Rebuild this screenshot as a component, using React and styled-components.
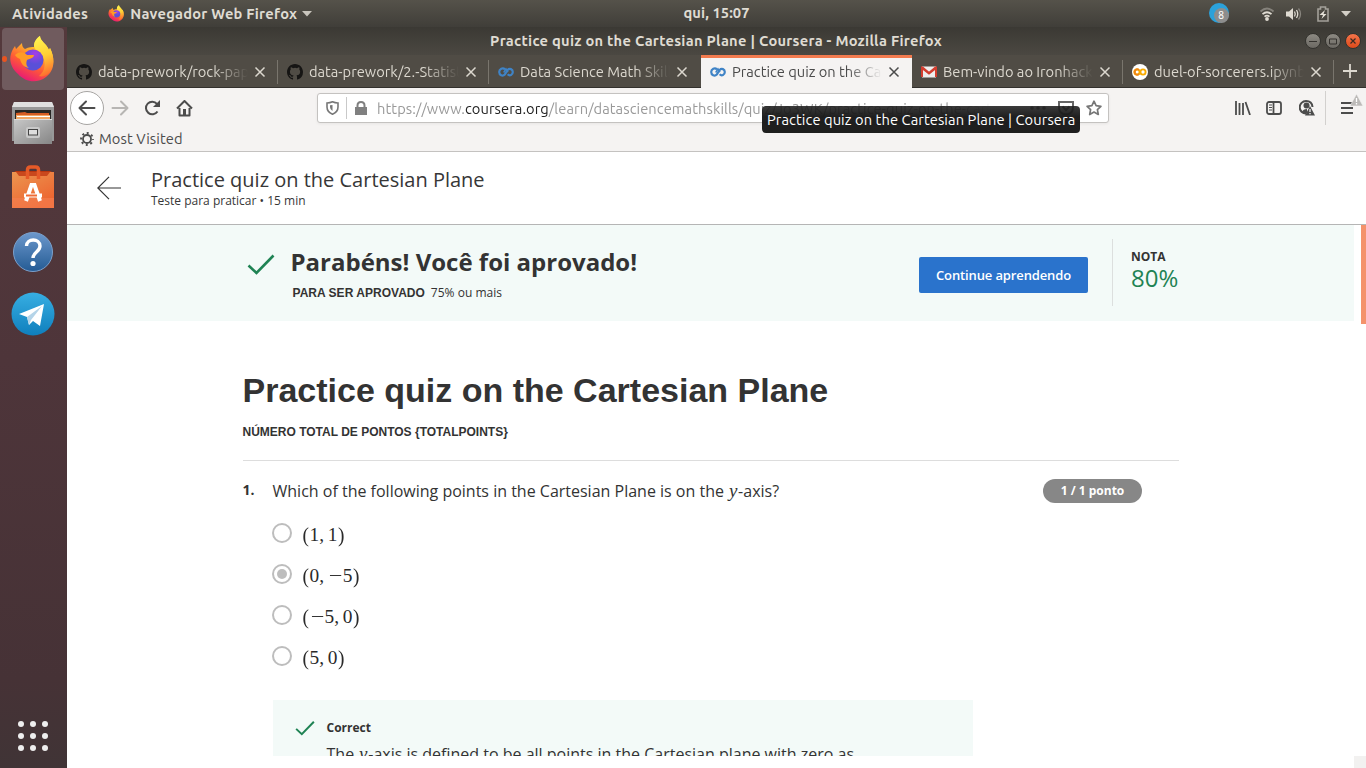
import React from 'react';
import styled, { createGlobalStyle } from 'styled-components';

const Global = createGlobalStyle`
  * { box-sizing: border-box; }
  html, body { margin: 0; overflow: hidden; }
  h1, h2, h3, p { margin: 0; }
  svg { display: block; flex: none; }
`;
const ui = `'Ubuntu', 'Noto Sans', sans-serif`;
const open = `'Open Sans', 'Noto Sans', sans-serif`;

const Desktop = styled.div`
  width: 1366px; height: 768px; display: flex; flex-direction: column;
  overflow: hidden; font-family: ${ui}; background: #fff; white-space: nowrap;
`;
const Text = styled.span`
  display: inline-block;
  font-size: ${p => p.$size || 14.67}px;
  font-weight: ${p => p.$weight || 400};
  letter-spacing: ${p => p.$track || 0}px;
  line-height: 18px;
`;
const TopBar = styled.header`
  height: 27px; flex: none; display: grid; grid-template-columns: 1fr auto 1fr; align-items: center;
  background: linear-gradient(#55524a, #403e39); color: #dfdbd2; padding: 0 15px 0 12px;
`;
const BarLeft = styled.div`display: flex; align-items: center; height: 27px;`;
const Clock = styled.div`padding: 0 0 2px 70px;`;
const AppMenu = styled.div`display: flex; align-items: center; margin-left: 20px; gap: 5px;`;
const Tray = styled.div`display: flex; align-items: center; justify-content: flex-end; height: 27px;`;
const Wrap = styled.div`margin-left: ${p => p.$l || 0}px; display: flex;`;
const Below = styled.div`display: flex; flex: 1; min-height: 0;`;
const Dock = styled.nav`
  width: 67px; flex: none; display: flex; flex-direction: column; align-items: center;
  background: linear-gradient(#54393c, #4e353a 45%, #463236 88%, #403436);
  padding: 1px 3px 13px 2px;
`;
const DockTile = styled.div`
  width: 62px; height: 62px; border-radius: 4px; background: #705b5e;
  display: flex; align-items: center; justify-content: center; position: relative;
  &::before { content: ''; position: absolute; left: 0; top: 28px; width: 5px; height: 6px; border-radius: 50%; background: #e95420; }
`;
const DockIcon = styled.div`height: 64px; display: flex; align-items: center; justify-content: center; padding-top: ${p => p.$drop || 0}px;`;
const Spacer = styled.div`flex: 1;`;
const AppGrid = styled.div`
  display: grid; grid-template-columns: repeat(3, 6px); gap: 6px; padding: 4px 1px 4px 0;
  & > i { width: 6px; height: 6px; border-radius: 50%; background: #eee; }
`;
const Window = styled.main`flex: 1; min-width: 0; display: flex; flex-direction: column;`;
const TitleBar = styled.div`
  height: 28px; flex: none; display: grid; grid-template-columns: 1fr auto 1fr; align-items: center;
  padding: 0 5px 0 4px; background: linear-gradient(#3b3934, #4b4842); color: #dfdbd2;
`;
const WindowButtons = styled.div`display: flex; gap: 4px; justify-content: flex-end;`;
const RoundButton = styled.div`
  width: 16px; height: 16px; border-radius: 50%; border: 1px solid #34332f;
  background: ${p => (p.$close ? 'linear-gradient(#f4744a, #de4a1a)' : 'linear-gradient(#8c8982, #6c6963)')};
  display: flex; align-items: center; justify-content: center;
`;
const Tabs = styled.div`
  height: 33px; flex: none; display: flex; background: #504c45; color: #dcd8cf;
`;
const Tab = styled.div`
  width: ${p => p.$w || 211}px; height: 33px; flex: none; display: flex; align-items: center; position: relative;
  padding: 0 0 1px 9px; overflow: hidden;
  background: ${p => (p.$active ? '#f5f3f2' : '#504c45')};
  color: ${p => (p.$active ? '#4b4b4b' : '#dcd8cf')};
  border-bottom: 1px solid ${p => (p.$active ? '#f5f3f2' : '#33312d')};
  border-top: 3px solid ${p => (p.$active ? '#f37b4f' : '#504c45')};
  ${p => p.$sep && `&::after { content: ''; position: absolute; right: 0; top: 2px; width: 1px; height: 24px; background: #79756d; }`}
`;
const TabTitle = styled.div`
  width: 150px; height: 20px; margin: 0 0 0 6px; overflow: hidden; flex: none;
  mask-image: linear-gradient(90deg, #000 calc(100% - 35px), transparent);
`;
const TabClose = styled.div`margin-left: 6px;`;
const Plus = styled.div`flex: 1; display: flex; align-items: center; justify-content: center; border-bottom: 1px solid #33312d;`;
const NavBar = styled.div`
  height: 41px; flex: none; display: flex; align-items: center; background: #f5f3f2; padding: 0 0 1px 3px; color: #4c4c4c;
`;
const BackButton = styled.div`
  width: 34px; height: 34px; border-radius: 50%; border: 1px solid #a7a5a3; background: #fff;
  display: flex; align-items: center; justify-content: center;
`;
const UrlBox = styled.div`
  width: 792px; height: 30px; margin-left: 124px; border: 1px solid #c4c2c0; border-radius: 3px;
  background: #fff; display: flex; align-items: center; padding-left: 8px; color: #999;
  box-shadow: 0 1px 3px rgba(0,0,0,.06);
`;
const Divider = styled.div`width: 1px; height: ${p => p.$h}px; background: ${p => p.$c || '#c9c9c9'}; margin: 0 ${p => p.$r || 0}px 0 ${p => p.$l || 0}px;`;
const Url = styled.div`
  width: 633px; overflow: hidden; margin: 2px 0 0 10px; height: 20px;
  mask-image: linear-gradient(90deg, #000 580px, transparent 615px);
  b { font-weight: 400; color: #222; }
`;
const Tooltip = styled.div`
  position: absolute; left: 762px; top: 106px; width: 318px; height: 27px; border-radius: 4px;
  background: linear-gradient(rgba(32,32,32,.88), rgba(24,24,24,.97) 40%); color: #fff; padding: 4px 5px;
`;
const Bookmarks = styled.div`
  height: 23px; flex: none; display: flex; align-items: center; gap: 5px; padding: 0 0 2px 13px; background: #f5f3f2;
  border-bottom: 1px solid #c4c2c0; color: #4c4c4c;
`;
const PageHeader = styled.div`
  height: 73px; flex: none; display: flex; border-bottom: 1px solid #b5b5b5; background: #fff;
  padding: 24px 0 0 30px; gap: 30px; font-family: ${open}; color: #373737;
`;
const HeaderText = styled.div`margin-top: -10px;`;
const QuizName = styled.div`font-size: 20px; line-height: 28px;`;
const QuizMeta = styled.div`font-size: 12px; line-height: 14px;`;
const Viewport = styled.section`height: 531px; flex: none; overflow: hidden; display: flex; font-family: ${open}; color: #333;`;
const Page = styled.div`width: 1287px; flex: none;`;
const ScrollTrack = styled.div`
  width: 12px; display: flex; justify-content: flex-end; background: #fff;
  &::after { content: ''; width: 5px; height: 99px; background: #f4926b; }
`;
const BottomTrack = styled.div`
  height: 12px; display: flex; justify-content: flex-end; background: #fff;
  &::after { content: ''; width: 12px; background: #f2f1f0; }
`;
const Banner = styled.div`height: 96px; background: #f3faf8; display: flex; padding-left: 180px;`;
const BannerCheck = styled.div`padding-top: 28px; width: 43.500px;`;
const Passed = styled.div`width: 628.500px; padding-top: 20px;`;
const Congrats = styled.h2`font-size: 24px; line-height: 34px; font-weight: 700;`;
const PassLine = styled.p`
  font-size: 12px; line-height: 16px; padding: 6px 0 0 2px; letter-spacing: 0.02px;
  b { font-family: 'Liberation Sans', sans-serif; margin-right: 6px; }
`;
const Continue = styled.button`
  width: 169px; height: 36px; margin-top: 32px; border: 0; border-radius: 2px; background: #2a73cc; color: #fff;
  font: 600 13px/36px ${open}; padding: 0; letter-spacing: -0.13px;
`;
const Grade = styled.div`
  margin: 14px 0 0 24px; height: 67px; border-left: 1px solid #dcdfde; padding: 10px 0 0 18px;
  font-size: 24px; line-height: 25px; color: #1f8354;
  b { display: block; font-size: 12px; line-height: 16px; color: #333; }
`;
const Quiz = styled.article`padding: 45px 0 0 175.500px; width: 1112px;`;
const Title = styled.h1`font: 700 34px/48px 'Liberation Sans', Arial, sans-serif;`;
const Points = styled.p`font: 700 12px/16px 'Liberation Sans', Arial, sans-serif; padding: 10px 0 20px; border-bottom: 1px solid #ddd;`;
const Question = styled.div`display: flex; padding-top: 18px; height: 64px;`;
const Num = styled.b`width: 30px; font-size: 14px; line-height: 22px;`;
const Prompt = styled.div`width: 770.500px; font-size: 16px; line-height: 24px;`;
const Score = styled.div`
  width: 99px; height: 24px; border-radius: 12px; background: #878787; color: #fff; text-align: center;
  font-size: 12px; line-height: 24px; font-weight: 700;
`;
const Options = styled.div`padding-left: 29.500px; margin-top: -2px;`;
const Option = styled.div`display: flex; height: 41px; gap: 10px; align-items: flex-start;`;
const Radio = styled.div`
  width: 20px; height: 20px; border-radius: 50%; border: 2px solid #bdbdbd; display: grid; place-items: center;
  &::after { content: ''; width: 10px; height: 10px; border-radius: 50%; background: ${p => (p.$on ? '#bdbdbd' : 'transparent')}; }
`;
const MathRow = styled.div`display: flex; font: 19.36px/24px 'Liberation Serif', serif; color: #2a2a2a;`;
const Glyph = styled.span`
  width: ${p => p.$w}em; text-align: ${p => p.$align || 'center'};
  transform: scale(${p => p.$sx || 1}, ${p => p.$sy || 1});
`;
const Var = styled.i`
  display: inline-block; width: 10px; font: italic 19px/1 'Liberation Serif', serif; line-height: 0; text-align: center;
`;
const Feedback = styled.div`
  margin: 13px 0 0 30.500px; width: 700px; height: 120px; background: #f3faf8; display: flex; padding: 20px 0 0 20.500px; gap: 11px;
`;
const FeedbackTitle = styled.b`display: block; font-size: 12px; line-height: 16px;`;
const FeedbackText = styled.p`font-size: 16px; line-height: 24px; padding-top: 6px;`;

const Firefox = ({ size, id }) => (
  <svg width={size} height={size} viewBox="0 0 48 48">
    <defs>
      <linearGradient id={id + 'a'} x1=".8" y1="0" x2=".3" y2="1"><stop offset="0" stopColor="#fff04a" /><stop offset=".35" stopColor="#ffb02a" /><stop offset=".65" stopColor="#ff5a36" /><stop offset="1" stopColor="#e5127d" /></linearGradient>
      <radialGradient id={id + 'b'} cx=".6" cy=".2"><stop offset="0" stopColor="#a63ce8" /><stop offset="1" stopColor="#5a50d8" /></radialGradient>
      <linearGradient id={id + 'c'} x1=".4" y1="0" x2=".6" y2="1"><stop offset="0" stopColor="#fff44f" /><stop offset=".5" stopColor="#ffce35" /><stop offset="1" stopColor="#ff6a2f" /></linearGradient>
    </defs>
    <path d="M4 14l2-3 1 3 6-6c0 3 1 5 3 6 4-2 7-2 9-2 0-5 3-9 6-11 0 5 7 8 9 14l1-2c6 12 4 23-4 29-9 7-21 5-28-3C1 32-1 23 4 14z" fill={`url(#${id}a)`} />
    <path d="M31 1c0 5 7 8 9 14l1-2c5 10 4 19-1 25-3 3-7 4-10 3 6-5 7-12 4-19-2-5-8-6-9-11 0-5 3-8 6-10z" fill={`url(#${id}c)`} />
    <circle cx="24" cy="25" r="10.500" fill={`url(#${id}b)`} />
    <path d="M6 20c5-4 9-3 12 0h7c0 3-5 4-7 5-1 3-1 6 2 8-6-1-8-5-9-9-2-1-4-2-5-4z" fill="#ff9b27" />
  </svg>
);
const Github = () => (
  <svg width="16" height="16" viewBox="0 0 16 16"><path fill="#161514" fillRule="evenodd" d="M8 0C3.58 0 0 3.58 0 8c0 3.54 2.29 6.53 5.47 7.59.4.07.55-.17.55-.38v-1.49c-2.01.37-2.53-.49-2.69-.94-.09-.23-.48-.94-.82-1.13-.28-.15-.68-.52-.01-.53.63-.01 1.08.58 1.23.82.72 1.21 1.87.87 2.33.66.07-.52.28-.87.51-1.07-1.78-.2-3.64-.89-3.64-3.95 0-.87.31-1.59.82-2.15-.08-.2-.36-1.02.08-2.12 0 0 .67-.21 2.2.82a7.4 7.4 0 014 0c1.53-1.04 2.2-.82 2.2-.82.44 1.1.16 1.92.08 2.12.51.56.82 1.27.82 2.15 0 3.07-1.87 3.75-3.65 3.95.29.25.54.73.54 1.48v2.2c0 .21.15.46.55.38A8 8 0 0016 8c0-4.42-3.58-8-8-8z" /></svg>
);
const Coursera = () => (
  <svg width="16" height="16" viewBox="0 0 16 16" fill="none" stroke="#3f83c6" strokeWidth="2.2"><path d="M7 5.4C4.8 3 1.2 5 1.2 8s3.4 4.8 5.6 2.5L9.6 6c2-2.2 5.2-.8 5.2 2s-3 4.4-5.2 2.300" /><path d="M5.700 8.500L8 5l2 3.200" strokeWidth="1.500" /></svg>
);
const Gmail = () => (
  <svg width="16" height="16" viewBox="0 0 16 16"><path d="M1 2.500h14v11H1z" fill="#eee" /><path d="M1 13V4l7 5.500L15 4v9" fill="none" stroke="#d33e30" strokeWidth="2" /><path d="M1 3l7 6 7-6" fill="none" stroke="#d33e30" strokeWidth="2" /></svg>
);
const Colab = () => (
  <svg width="16" height="16" viewBox="0 0 16 16"><circle cx="8" cy="8" r="8" fill="#fff" /><g fill="none" stroke="#f9ab00" strokeWidth="1.900"><circle cx="5" cy="8" r="2.600" /><circle cx="11" cy="8" r="2.600" /></g><path d="M7 6a2.600 2.600 0 100 4" fill="none" stroke="#ee8512" strokeWidth="1.900" /></svg>
);
const Cross = () => <svg width="12" height="12" viewBox="0 0 12 12" fill="none" stroke="currentColor" strokeWidth="1.500"><path d="M1.500 1.500l9 9M10.500 1.500l-9 9" /></svg>;
const Check = ({ w, h, sw = 2.6 }) => <svg width={w} height={h} viewBox="0 0 28 24" fill="none" stroke="#1f8354" strokeWidth={sw}><path d="M1.500 12.500L9.500 20 26.500 2.500" /></svg>;
const Arrow = ({ flip, color }) => <svg width="18" height="16" viewBox="0 0 18 16" fill="none" stroke={color} strokeWidth="2" strokeLinecap="round" strokeLinejoin="round" transform={flip ? 'scale(-1 1)' : undefined}><path d="M16.500 8H2M8 1.500L1.500 8 8 14.500" /></svg>;

const Files = () => (
  <svg width="42" height="44" viewBox="0 0 42 44">
    <defs><linearGradient id="cab" x2="1" y2="1"><stop stopColor="#c8c8c8" /><stop offset="1" stopColor="#868686" /></linearGradient></defs>
    <path d="M2 1h38l2 5v34H0V6z" fill="#989898" /><path d="M2 1h38l2 5H0z" fill="#e0e0e0" />
    <path d="M3 9h36v11H3z" fill="#272624" /><path d="M4 12l9-1 2 1h22v7H4z" fill="#d65d24" /><path d="M4 14h34v5H4z" fill="#f1a765" /><path d="M5 15.500h33" stroke="#fff" />
    <path d="M2 18h38v25H2z" fill="url(#cab)" /><path d="M2 18.500h38" stroke="#ddd" />
    <rect x="14" y="26" width="14" height="11" rx="2" fill="#c9c9c9" /><rect x="16.500" y="28.500" width="9" height="5.500" fill="#ddd" stroke="#444" />
  </svg>
);
const Software = () => (
  <svg width="42" height="44" viewBox="0 0 42 44">
    <defs><linearGradient id="bag" x2=".6" y2="1"><stop stopColor="#eb9650" /><stop offset="1" stopColor="#ed6430" /></linearGradient></defs>
    <path d="M0 8l4-2h34l4 2z" fill="#b9360f" /><path d="M0 7h42v36H0z" fill="url(#bag)" /><path d="M4 7h34l-3 4H7z" fill="#c9481d" />
    <path d="M0 33h42v10H0z" fill="#f58052" opacity=".6" />
    <path d="M15.500 14V5q0-3 3-3h5q3 0 3 3v9" fill="none" stroke="#e65a28" strokeWidth="3.500" />
    <path d="M14 36l5.500-16h3L28 36M12 30.500h18" fill="none" stroke="#fff" strokeWidth="4" /><path d="M14 30.500h11" stroke="#f06c36" strokeWidth="2" />
  </svg>
);
const Help = () => (
  <svg width="42" height="42" viewBox="0 0 42 42">
    <defs><linearGradient id="hlp" x2="0" y2="1"><stop stopColor="#6c98cc" /><stop offset="1" stopColor="#245b94" /></linearGradient></defs>
    <circle cx="21" cy="21" r="19.500" fill="url(#hlp)" stroke="#7ba0cb" />
    <path d="M14.500 15c0-8 13.500-8 13.500 0 0 6-7 6-7 12" fill="none" stroke="#fff" strokeWidth="3.400" /><circle cx="21" cy="32.500" r="2.600" fill="#fff" />
  </svg>
);
const Telegram = () => (
  <svg width="44" height="44" viewBox="0 0 44 44">
    <defs><linearGradient id="tg" x2="0" y2="1"><stop stopColor="#37aee2" /><stop offset="1" stopColor="#0f7fbd" /></linearGradient></defs>
    <circle cx="22" cy="22" r="21.500" fill="url(#tg)" /><path d="M8 22l25-10-4 22-7-5-4 4-2-8z" fill="#fff" /><path d="M16 25l15-11-11 14-2 5z" fill="#b5d4e8" />
  </svg>
);

const widths = { '(': 0.389, ')': 0.389, ',': 0.445, '−': 0.778 };
const Expr = ({ value }) => (
  <MathRow>
    {[...value].map((c, i) => (
      <Glyph key={i} $w={widths[c] || 0.5} $align={c === ',' ? 'left' : 'center'} $sx={c === '−' ? 1.25 : 1} $sy={'()'.includes(c) ? 1.12 : 1}>{c}</Glyph>
    ))}
  </MathRow>
);

const tabs = [
  { icon: <Github />, text: 'data-prework/rock-paper', sep: true },
  { icon: <Github />, text: 'data-prework/2.-Statistics', sep: true },
  { icon: <Coursera />, text: 'Data Science Math Skills', width: 212 },
  { icon: <Coursera />, text: 'Practice quiz on the Cartesian', active: true },
  { icon: <Gmail />, text: 'Bem-vindo ao Ironhack', sep: true },
  { icon: <Colab />, text: 'duel-of-sorcerers.ipynb -', sep: true },
];
const options = ['(1,1)', '(0,−5)', '(−5,0)', '(5,0)'];

export default function App() {
  return (
    <Desktop>
      <Global />
      <TopBar>
        <BarLeft>
          <Text $weight={700} $track={0.3}>Atividades</Text>
          <AppMenu>
            <Firefox size={17} id="s" />
            <Text $weight={700} $track={0.24}>Navegador Web Firefox</Text>
            <svg width="10" height="6"><path d="M0 0h10L5 5.500z" fill="#c9c5bd" /></svg>
          </AppMenu>
        </BarLeft>
        <Clock><Text $weight={700} $track={0.1}>qui, 15:07</Text></Clock>
        <Tray>
          <svg width="21" height="21" viewBox="0 0 21 21"><circle cx="10" cy="10" r="10" fill="#2ba1da" /><circle cx="12.500" cy="12.500" r="7.500" fill="#8d8d8d" /><text x="12" y="16" fontSize="10" fill="#fff" textAnchor="middle" fontFamily="Noto Sans">8</text></svg>
          <Wrap $l={29}><svg width="16" height="14" viewBox="0 0 16 14" fill="none" stroke="#dfdbd2" strokeWidth="1.800"><path d="M1.500 4.500q6.500-6 13 0" stroke="#85827b" /><path d="M3.500 7.200q4.500-4 9 0M5.500 9.600q2.500-2 5 0" /><circle cx="8" cy="12" r="1" fill="#dfdbd2" /></svg></Wrap>
          <Wrap $l={11}><svg width="16" height="14" viewBox="0 0 16 14"><path d="M0 4.500h3L7 1v12L3 9.500H0z" fill="#dfdbd2" /><g fill="none" stroke="#dfdbd2" strokeWidth="1.300"><path d="M8.500 4.500q1.500 2.500 0 5M10.500 3q2.500 4 0 8" /><path d="M12.500 1.500q4 5.500 0 11" stroke="#89867f" /></g></svg></Wrap>
          <Wrap $l={15}><svg width="12" height="16" viewBox="0 0 12 16"><path d="M1 3h2.500V1h5v2H11v12H1z" fill="none" stroke="#a3a099" strokeWidth="1.600" /><path d="M8 4L2.500 9H6l-1.500 4L9.500 8H6.500z" fill="#e6e2d9" /></svg></Wrap>
          <Wrap $l={12}><svg width="10" height="6"><path d="M0 0h10L5 5.500z" fill="#d3cfc7" /></svg></Wrap>
        </Tray>
      </TopBar>
      <Below>
        <Dock>
          <DockTile><Firefox size={48} id="l" /></DockTile>
          <DockIcon $drop={2}><Files /></DockIcon>
          <DockIcon $drop={2}><Software /></DockIcon>
          <DockIcon $drop={3}><Help /></DockIcon>
          <DockIcon><Telegram /></DockIcon>
          <Spacer />
          <AppGrid>{Array.from({ length: 9 }, (_, i) => <i key={i} />)}</AppGrid>
        </Dock>
        <Window>
          <TitleBar>
            <span />
            <Text $weight={700} $track={0.26}>Practice quiz on the Cartesian Plane | Coursera - Mozilla Firefox</Text>
            <WindowButtons>
              <RoundButton><svg width="8" height="8"><path d="M0 4.500h8" stroke="#35332f" /></svg></RoundButton>
              <RoundButton><svg width="8" height="8"><path d="M.5 2h7v5h-7z" fill="none" stroke="#35332f" /></svg></RoundButton>
              <RoundButton $close><svg width="6" height="6"><path d="M.5.5l5 5m0-5l-5 5" stroke="#3b2a22" strokeWidth="1.200" /></svg></RoundButton>
            </WindowButtons>
          </TitleBar>
          <Tabs>
            {tabs.map((t, i) => (
              <Tab key={i} $active={t.active} $sep={t.sep} $w={t.width}>
                {t.icon}
                <TabTitle><Text>{t.text}</Text></TabTitle>
                <TabClose><Cross /></TabClose>
              </Tab>
            ))}
            <Plus><svg width="14" height="14"><path d="M7 0v14M0 7h14" stroke="#dcd8cf" strokeWidth="1.800" /></svg></Plus>
          </Tabs>
          <NavBar>
            <BackButton><Arrow color="#4c4c4c" /></BackButton>
            <Wrap $l={7}><Arrow flip color="#b7b5b3" /></Wrap>
            <Wrap $l={15}><svg width="17" height="16" viewBox="0 0 17 16" fill="none" stroke="#4c4c4c" strokeWidth="2"><path d="M13.500 11.500A6.300 6.300 0 1113 3.800" /><path d="M16 0v7H9z" fill="#4c4c4c" stroke="none" /></svg></Wrap>
            <Wrap $l={15}><svg width="17" height="17" viewBox="0 0 17 17" fill="none" stroke="#4c4c4c" strokeWidth="2"><path d="M1 8.500L8.500 1 16 8.500M3.500 8v7.500h10V8" strokeLinejoin="round" /><path d="M7 9h3v6H7z" fill="#4c4c4c" stroke="none" /></svg></Wrap>
            <UrlBox>
              <svg width="13" height="14" viewBox="0 0 13 14" fill="none" stroke="#777" strokeWidth="1.600"><path d="M1 2q3 0 5.500-1.200Q9 2 12 2v4q0 5-5.500 7.200Q1 11 1 6z" /><path d="M6.500 4v6Q4 8.500 4 6V4.300z" fill="#777" stroke="none" /></svg>
              <Divider $h={22} $l={7} $r={8} />
              <svg width="12" height="14" viewBox="0 0 12 14"><path d="M0 6h12v8H0z" fill="#808080" /><path d="M2.500 7V4.500q0-3.500 3.500-3.500t3.500 3.500V7" fill="none" stroke="#808080" strokeWidth="2" /></svg>
              <Url><Text $track={0.08}>https://www.<b>coursera.org</b>/learn/datasciencemathskills/quiz/Jo3WK/practice-quiz-on-the-cartesian</Text></Url>
              <Wrap $l={20}><svg width="16" height="4" fill="#666"><circle cx="2" cy="2" r="1.800" /><circle cx="8" cy="2" r="1.800" /><circle cx="14" cy="2" r="1.800" /></svg></Wrap>
              <Wrap $l={12}><svg width="16" height="15" viewBox="0 0 16 15" fill="none" stroke="#666" strokeWidth="2"><path d="M1 1h14v5q0 7-7 7.500Q1 13 1 6zM4.500 5.500L8 9l3.500-3.500" /></svg></Wrap>
              <Wrap $l={12}><svg width="16" height="16" viewBox="0 0 16 16" fill="none" stroke="#777" strokeWidth="1.700" strokeLinejoin="round"><path d="M8 1.200l2.100 4.400 4.800.7-3.500 3.300.9 4.900L8 12.100l-4.300 2.400.9-4.900L1.100 6.300l4.800-.7z" /></svg></Wrap>
            </UrlBox>
            <Wrap $l={126}><svg width="16" height="14" viewBox="0 0 16 14" stroke="#4c4c4c" strokeWidth="1.800"><path d="M1 0v14M4.500 2v12M8 2v12M10.500 1l4.500 13" /></svg></Wrap>
            <Wrap $l={15}><svg width="16" height="14" viewBox="0 0 16 14" fill="none" stroke="#4c4c4c" strokeWidth="1.800"><rect x="1" y="1" width="14" height="12" rx="2" /><path d="M7.500 1v12" /><path d="M3 4h3M3 6.500h3M3 9h3" strokeWidth="1" /></svg></Wrap>
            <Wrap $l={17}><svg width="16" height="16" viewBox="0 0 16 16"><path d="M7 1a6.300 6.300 0 000 12.600" fill="none" stroke="#4c4c4c" strokeWidth="2" /><path d="M7 1q6 0 6.500 6" fill="none" stroke="#4c4c4c" strokeWidth="2" /><circle cx="7.500" cy="5.500" r="3" fill="#4c4c4c" /><path d="M3 12q1-3 5-3v5q-3 0-5-2zM11 6l5 9.500H6z" fill="#4c4c4c" /><path d="M11 9v3M11 13v1.200" stroke="#fff" strokeWidth="1.200" /></svg></Wrap>
            <Divider $h={34} $l={10} $r={15} $c="#d2d0ce" />
            <svg width="25" height="28" viewBox="0 0 25 28"><path d="M0 9h12M0 14h12M0 19h12" stroke="#4c4c4c" strokeWidth="2" /><path d="M15.500 0L22 12H9z" fill="#bcbab8" stroke="#f5f3f2" strokeWidth=".6" /><path d="M15.500 4v4M15.500 9v1.500" stroke="#fff" strokeWidth="1.300" /></svg>
          </NavBar>
          <Bookmarks>
            <svg width="14" height="14" viewBox="0 0 14 14" fill="none" stroke="#4c4c4c"><circle cx="7" cy="7" r="4" strokeWidth="1.800" /><circle cx="7" cy="7" r="5.900" strokeWidth="2" strokeDasharray="2 2.634" strokeDashoffset="1" /></svg>
            <Text $track={0.1}>Most Visited</Text>
          </Bookmarks>
          <PageHeader>
            <svg width="24" height="24" viewBox="0 0 24 24" fill="none" stroke="#333" strokeWidth="1.200"><path d="M24 12H1M12 .8L.8 12 12 23.200" /></svg>
            <HeaderText>
              <QuizName>Practice quiz on the Cartesian Plane</QuizName>
              <QuizMeta>Teste para praticar • 15 min</QuizMeta>
            </HeaderText>
          </PageHeader>
          <Viewport>
            <Page>
              <Banner>
                <BannerCheck><Check w={28} h={24} /></BannerCheck>
                <Passed>
                  <Congrats>Parabéns! Você foi aprovado!</Congrats>
                  <PassLine><b>PARA SER APROVADO</b>75% ou mais</PassLine>
                </Passed>
                <Continue>Continue aprendendo</Continue>
                <Grade><b>NOTA</b>80%</Grade>
              </Banner>
              <Quiz>
                <Title>Practice quiz on the Cartesian Plane</Title>
                <Points>NÚMERO TOTAL DE PONTOS {'{TOTALPOINTS}'}</Points>
                <Question>
                  <Num>1.</Num>
                  <Prompt>Which of the following points in the Cartesian Plane is on the <Var>y</Var>-axis?</Prompt>
                  <Score>1 / 1 ponto</Score>
                </Question>
                <Options>
                  {options.map((o, i) => <Option key={o}><Radio $on={i === 1} /><Expr value={o} /></Option>)}
                </Options>
                <Feedback>
                  <Check w={22} h={17} sw={2.8} />
                  <div>
                    <FeedbackTitle>Correct</FeedbackTitle>
                    <FeedbackText>The <Var>y</Var>-axis is defined to be all points in the Cartesian plane with zero as</FeedbackText>
                  </div>
                </Feedback>
              </Quiz>
            </Page>
            <ScrollTrack />
          </Viewport>
          <BottomTrack />
        </Window>
      </Below>
      <Tooltip><Text $track={0.09}>Practice quiz on the Cartesian Plane | Coursera</Text></Tooltip>
    </Desktop>
  );
}
